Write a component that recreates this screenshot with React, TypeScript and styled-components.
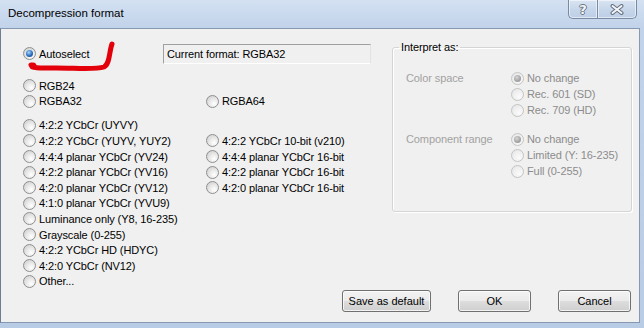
import React from 'react';
import styled, { createGlobalStyle } from 'styled-components';

const GlobalStyle = createGlobalStyle`
  html, body {
    margin: 0;
    padding: 0;
    background: #bccee6;
  }
  body {
    font-family: "Liberation Sans", Arial, sans-serif;
    font-size: 11px;
    letter-spacing: -0.1px;
    color: #000;
  }
`;

const Window = styled.div`
  position: relative;
  width: 644px;
  height: 328px;
  display: flex;
  flex-direction: column;
  background: linear-gradient(#d3e1f2, #c1d3ea 28px, #b9cce5);
  overflow: hidden;
`;

const TitleBar = styled.div`
  height: 28px;
  flex: 0 0 28px;
  display: flex;
  align-items: flex-start;
  padding-left: 8px;
`;

const Title = styled.div`
  flex: 1;
  font-family: "Liberation Sans", Arial, sans-serif;
  font-size: 11.5px;
  letter-spacing: 0;
  line-height: 27px;
  color: #000;
`;

const CaptionButtons = styled.div`
  display: flex;
  margin-right: 7px;
`;

const CaptionButton = styled.div<{ $w: number; $side: 'left' | 'right' }>`
  width: ${(p) => p.$w}px;
  height: 19px;
  box-sizing: border-box;
  border: 1px solid #7a8aa2;
  border-top: none;
  ${(p) => (p.$side === 'left' ? 'border-right: none;' : '')}
  border-radius: ${(p) => (p.$side === 'left' ? '0 0 0 5px' : '0 0 5px 0')};
  background: linear-gradient(#d9e4f1, #c6d6ea 55%, #bccee6);
  box-shadow: inset 0 0 0 1px rgba(255, 255, 255, 0.55);
  display: flex;
  align-items: center;
  justify-content: center;
`;

const HelpGlyph = styled.span`
  font-family: "DejaVu Sans", sans-serif;
  font-weight: bold;
  font-size: 13px;
  line-height: 1;
  color: #f3f5f8;
  text-shadow: 1px 0 0 #6b7482, -1px 0 0 #6b7482, 0 1px 0 #6b7482, 0 -1px 0 #6b7482;
`;

const Client = styled.div`
  flex: 1;
  margin: 0 4px 6px 0;
  background: #f0f0f0;
  border: 1px solid #8799b1;
  border-left-color: #6d7e96;
  display: flex;
  flex-direction: column;
`;

const TopArea = styled.div`
  flex: 1;
  display: flex;
  align-items: flex-start;
`;

const LeftPane = styled.div`
  flex: 0 0 391px;
  box-sizing: border-box;
  padding: 14px 0 0 22px;
  display: flex;
  flex-direction: column;
`;

const AutoRow = styled.div`
  display: grid;
  grid-template-columns: 140px 208px;
  align-items: center;
  height: 21px;
`;

const CurrentBox = styled.div`
  height: 20px;
  box-sizing: border-box;
  border: 1px solid;
  border-color: #a0a0a0 #e3e3e3 #ffffff #a0a0a0;
  padding-left: 3px;
  line-height: 18px;
  white-space: nowrap;
`;

const OptionGrid = styled.div<{ $top: number }>`
  display: grid;
  grid-template-columns: 183px auto;
  grid-auto-rows: 15.6px;
  margin-top: ${(p) => p.$top}px;
`;

const Option = styled.label<{ $disabled?: boolean }>`
  display: flex;
  align-items: center;
  gap: 3px;
  white-space: nowrap;
  color: ${(p) => (p.$disabled ? '#8c8c8c' : '#000')};
`;

const Circle = styled.span<{ $checked?: boolean; $disabled?: boolean }>`
  position: relative;
  flex: 0 0 13px;
  width: 13px;
  height: 13px;
  box-sizing: border-box;
  border-radius: 50%;
  border: 1px solid ${(p) => (p.$disabled ? '#c4c4c4' : '#8e8f8f')};
  background: ${(p) =>
    p.$disabled
      ? 'radial-gradient(circle at 65% 70%, #fafafa 0, #f0f0f0 50%, #e2e2e2 100%)'
      : 'radial-gradient(circle at 65% 70%, #ffffff 0, #e8e8e8 45%, #c8c8c8 100%)'};

  &::after {
    content: '';
    display: ${(p) => (p.$checked ? 'block' : 'none')};
    position: absolute;
    left: 2px;
    top: 2px;
    width: 7px;
    height: 7px;
    border-radius: 50%;
    background: ${(p) =>
      p.$disabled
        ? 'radial-gradient(circle at 40% 35%, #d6d6d6, #a2a2a2 60%, #8c8c8c)'
        : 'radial-gradient(circle at 40% 35%, #a8d8fb, #2b6cbf 55%, #12407f)'};
  }
`;

const GroupBox = styled.fieldset`
  margin: 12px 0 0 0;
  width: 240px;
  box-sizing: border-box;
  border: 1px solid #d5d5d5;
  border-radius: 3px;
  box-shadow: inset 1px 1px 0 #fff, 1px 1px 0 #fff;
  padding: 16px 0 32px 0;
  display: flex;
  flex-direction: column;
  gap: 13px;
`;

const Legend = styled.legend`
  margin-left: 6px;
  padding: 0 2px;
  line-height: 13px;
  font-size: 11px;
`;

const Section = styled.div`
  display: flex;
  align-items: flex-start;
  padding-left: 13px;
`;

const SectionLabel = styled.div`
  flex: 0 0 105px;
  color: #a2a2a2;
  line-height: 16px;
  white-space: nowrap;
`;

const SectionOptions = styled.div`
  display: grid;
  grid-auto-rows: 16px;
`;

const ButtonRow = styled.div`
  flex: 0 0 32px;
  display: flex;
  justify-content: flex-end;
  align-items: flex-start;
  gap: 27px;
  padding: 1px 8px 0 0;
`;

const Button = styled.button<{ $w: number }>`
  width: ${(p) => p.$w}px;
  height: 22px;
  margin: 0;
  padding: 0;
  border: 1px solid #707070;
  border-radius: 3px;
  background: linear-gradient(#f2f2f2, #ebebeb 48%, #dddddd 52%, #cfcfcf);
  box-shadow: inset 0 0 0 1px rgba(255, 255, 255, 0.75);
  font-family: "Liberation Sans", Arial, sans-serif;
  font-size: 11px;
  color: #000;
`;

const Scribble = styled.svg`
  position: absolute;
  left: 0;
  top: 0;
  pointer-events: none;
`;

type Row = [string, string?];

const rgbRows: Row[] = [['RGB24'], ['RGBA32', 'RGBA64']];

const yuvRows: Row[] = [
  ['4:2:2 YCbCr (UYVY)'],
  ['4:2:2 YCbCr (YUYV, YUY2)', '4:2:2 YCbCr 10-bit (v210)'],
  ['4:4:4 planar YCbCr (YV24)', '4:4:4 planar YCbCr 16-bit'],
  ['4:2:2 planar YCbCr (YV16)', '4:2:2 planar YCbCr 16-bit'],
  ['4:2:0 planar YCbCr (YV12)', '4:2:0 planar YCbCr 16-bit'],
  ['4:1:0 planar YCbCr (YVU9)'],
  ['Luminance only (Y8, 16-235)'],
  ['Grayscale (0-255)'],
  ['4:2:2 YCbCr HD (HDYC)'],
  ['4:2:0 YCbCr (NV12)'],
  ['Other...'],
];

const interpret = [
  { label: 'Color space', options: ['No change', 'Rec. 601 (SD)', 'Rec. 709 (HD)'] },
  { label: 'Component range', options: ['No change', 'Limited (Y: 16-235)', 'Full (0-255)'] },
];

function Radio({ text, checked, disabled }: { text: string; checked?: boolean; disabled?: boolean }) {
  return (
    <Option $disabled={disabled}>
      <Circle $checked={checked} $disabled={disabled} />
      {text}
    </Option>
  );
}

function Options({ rows, top }: { rows: Row[]; top: number }) {
  return (
    <OptionGrid $top={top}>
      {rows.map(([a, b]) => (
        <React.Fragment key={a}>
          <Radio text={a} />
          {b ? <Radio text={b} /> : <span />}
        </React.Fragment>
      ))}
    </OptionGrid>
  );
}

export default function App() {
  return (
    <>
      <GlobalStyle />
      <Window>
        <TitleBar>
          <Title>Decompression format</Title>
          <CaptionButtons>
            <CaptionButton $w={29} $side="left">
              <HelpGlyph>?</HelpGlyph>
            </CaptionButton>
            <CaptionButton $w={40} $side="right">
              <svg width="14" height="11" viewBox="0 0 14 11">
                <path d="M2.5 2 L11.5 9 M11.5 2 L2.5 9" stroke="#667080" strokeWidth="4" strokeLinecap="round" />
                <path d="M2.5 2 L11.5 9 M11.5 2 L2.5 9" stroke="#f3f5f8" strokeWidth="2" strokeLinecap="round" />
              </svg>
            </CaptionButton>
          </CaptionButtons>
        </TitleBar>

        <Client>
          <TopArea>
            <LeftPane>
              <AutoRow>
                <Radio text="Autoselect" checked />
                <CurrentBox>Current format: RGBA32</CurrentBox>
              </AutoRow>
              <Options rows={rgbRows} top={14} />
              <Options rows={yuvRows} top={8.4} />
            </LeftPane>

            <GroupBox>
              <Legend>Interpret as:</Legend>
              {interpret.map((s) => (
                <Section key={s.label}>
                  <SectionLabel>{s.label}</SectionLabel>
                  <SectionOptions>
                    {s.options.map((o, i) => (
                      <Radio key={o} text={o} checked={i === 0} disabled />
                    ))}
                  </SectionOptions>
                </Section>
              ))}
            </GroupBox>
          </TopArea>

          <ButtonRow>
            <Button $w={89}>Save as default</Button>
            <Button $w={73}>OK</Button>
            <Button $w={73}>Cancel</Button>
          </ButtonRow>
        </Client>

        <Scribble width="644" height="328" viewBox="0 0 644 328">
          <path
            d="M31 65 C 33 69, 42 68, 56 68 C 76 68, 95 70, 104 67 C 110 64, 109 52, 112 44"
            fill="none"
            stroke="#e3000b"
            strokeWidth="5"
            strokeLinecap="round"
          />
          <circle cx="33" cy="66" r="3.5" fill="#e3000b" />
        </Scribble>
      </Window>
    </>
  );
}
